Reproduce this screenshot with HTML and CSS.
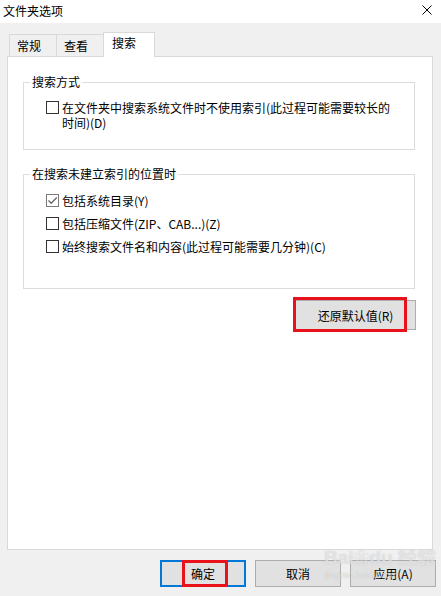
FILE: index.html
```html
<!DOCTYPE html>
<html lang="zh-CN">
<head>
<meta charset="utf-8">
<title>文件夹选项</title>
<link rel="stylesheet" href="styles.css">
</head>
<body>
<div class="window">
  <div class="titlebar">
    <span class="title">文件夹选项</span>
    <svg class="close" width="10" height="10" viewBox="0 0 10 10"><path d="M0.5 0.5 L9.5 9.5 M9.5 0.5 L0.5 9.5" stroke="#000" stroke-width="1" fill="none"/></svg>
  </div>
  <div class="tabs">
    <div class="tab t1">常规</div>
    <div class="tab t2">查看</div>
    <div class="tab active">搜索</div>
  </div>
  <div class="panel">
    <fieldset class="group g1">
      <legend>搜索方式</legend>
      <div class="row wrap">
        <span class="box"></span>
        <span class="label long">在文件夹中搜索系统文件时不使用索引(此过程可能需要较长的时间)(D)</span>
      </div>
    </fieldset>
    <fieldset class="group g2">
      <legend>在搜索未建立索引的位置时</legend>
      <div class="row">
        <span class="box checked"><svg width="11" height="11" viewBox="0 0 11 11"><path d="M1.5 5.5 L4.2 8.3 L9.8 2.5" stroke="#666" stroke-width="1.3" fill="none"/></svg></span>
        <span class="label">包括系统目录(Y)</span>
      </div>
      <div class="row">
        <span class="box"></span>
        <span class="label">包括压缩文件(ZIP、CAB...)(Z)</span>
      </div>
      <div class="row">
        <span class="box"></span>
        <span class="label">始终搜索文件名和内容(此过程可能需要几分钟)(C)</span>
      </div>
    </fieldset>
    <div class="restore-row">
      <div class="btn-wrap">
        <button class="btn restore">还原默认值(R)</button>
        <span class="mark mark-restore"></span>
      </div>
    </div>
  </div>
  <div class="footer">
    <div class="btn-wrap">
      <button class="btn ok">确定</button>
      <span class="mark mark-ok"></span>
    </div>
    <button class="btn">取消</button>
    <button class="btn">应用(A)</button>
    <div class="watermark">
      <span class="wm-main">Bai<span class="paw">❀</span>du 经验</span>
      <span class="wm-sub">jingyan.baidu.com</span>
    </div>
  </div>
</div>
</body>
</html>
```
FILE: styles.css
```css
html, body {
  margin: 0;
  padding: 0;
}
body {
  background: #f0f0f0;
  font-family: "Noto Sans CJK SC", "Microsoft YaHei", sans-serif;
  font-size: 12px;
  color: #000;
}
.window {
  width: 441px;
  height: 596px;
  position: relative;
  overflow: hidden;
}
.titlebar {
  height: 23px;
  background: #fff;
  display: flex;
  align-items: center;
  justify-content: space-between;
  padding: 0 9px 0 3px;
  box-sizing: border-box;
}
.title {
  line-height: 22px;
  margin-top: -1px;
}
.close {
  display: block;
  margin-top: -3px;
}
.tabs {
  display: flex;
  align-items: flex-end;
  height: 25px;
  margin: 9px 0 0 9px;
  position: relative;
  z-index: 2;
}
.tab {
  box-sizing: border-box;
  height: 22px;
  border: 1px solid #d9d9d9;
  border-bottom: none;
  padding-left: 7px;
  line-height: 21px;
  margin-bottom: 1px;
  background: #f0f0f0;
}
.t1 { width: 48px; }
.t2 { width: 48px; margin-left: -1px; }
.tab.active {
  width: 52px;
  height: 25px;
  margin-left: -1px;
  margin-bottom: 0;
  background: #fff;
  line-height: 20px;
  padding-left: 8px;
}
.panel {
  box-sizing: border-box;
  margin: -1px 0 0 7px;
  width: 426px;
  height: 494px;
  border: 1px solid #d9d9d9;
  background: #fff;
  padding: 0 17px 0 15px;
  position: relative;
  z-index: 1;
}
.group {
  border: 1px solid #dcdcdc;
  margin: 0;
  padding: 0 0 0 6px;
  min-width: 0;
}
.group legend {
  padding: 0 2px;
  line-height: 14px;
  font-size: 12px;
}
.g1 {
  margin-top: 18px;
  padding-bottom: 19px;
}
.g2 {
  margin-top: 17px;
  padding-bottom: 30px;
}
.row {
  display: flex;
  align-items: center;
  margin-left: 16px;
  line-height: 23px;
}
.g2 legend + .row {
  margin-top: 8px;
}
.row.wrap {
  align-items: flex-start;
  margin-top: 11px;
  line-height: 15px;
}
.row.wrap .box {
  margin-top: 1px;
}
.box {
  box-sizing: border-box;
  width: 13px;
  height: 13px;
  border: 1px solid #333;
  background: #fff;
  flex: none;
  display: flex;
  align-items: center;
  justify-content: center;
}
.box.checked {
  border-color: #7a7a7a;
}
.box svg {
  display: block;
}
.label {
  margin-left: 3px;
  white-space: nowrap;
}
.label.long {
  white-space: normal;
  width: 334px;
}
.restore-row {
  display: flex;
  justify-content: flex-end;
  margin-top: 11px;
  margin-right: -1px;
}
.btn-wrap {
  position: relative;
  display: flex;
}
.btn {
  box-sizing: border-box;
  width: 86px;
  height: 27px;
  border: 1px solid #adadad;
  background: #e1e1e1;
  font-family: "Noto Sans CJK SC", "Microsoft YaHei", sans-serif;
  font-size: 12px;
  color: #000;
  padding: 0;
  margin: 0;
}
.btn.restore {
  width: 121px;
  height: 30px;
}
.btn.ok {
  border: 2px solid #0078d7;
}
.mark {
  position: absolute;
  box-sizing: border-box;
  border: 3px solid #e8111c;
  pointer-events: none;
}
.mark-restore {
  left: -2px;
  top: -3px;
  width: 114px;
  height: 35px;
}
.mark-ok {
  left: 22px;
  top: 0;
  width: 46px;
  height: 27px;
}
.footer {
  display: flex;
  justify-content: flex-end;
  gap: 9px;
  margin-top: 10px;
  padding-right: 5px;
  position: relative;
}
.watermark {
  position: absolute;
  left: 324px;
  top: -13px;
  display: flex;
  flex-direction: column;
  pointer-events: none;
  color: rgba(255, 255, 255, 0.55);
  text-shadow: 0 0 1px rgba(150, 150, 150, 0.55);
}
.wm-main {
  font-family: "Liberation Sans", "Noto Sans CJK SC", sans-serif;
  font-weight: bold;
  font-size: 19px;
  line-height: 22px;
  letter-spacing: 0;
}
.paw {
  font-size: 16px;
}
.wm-sub {
  font-family: "Liberation Sans", sans-serif;
  font-size: 9px;
  line-height: 10px;
  margin-left: 1px;
}
```
